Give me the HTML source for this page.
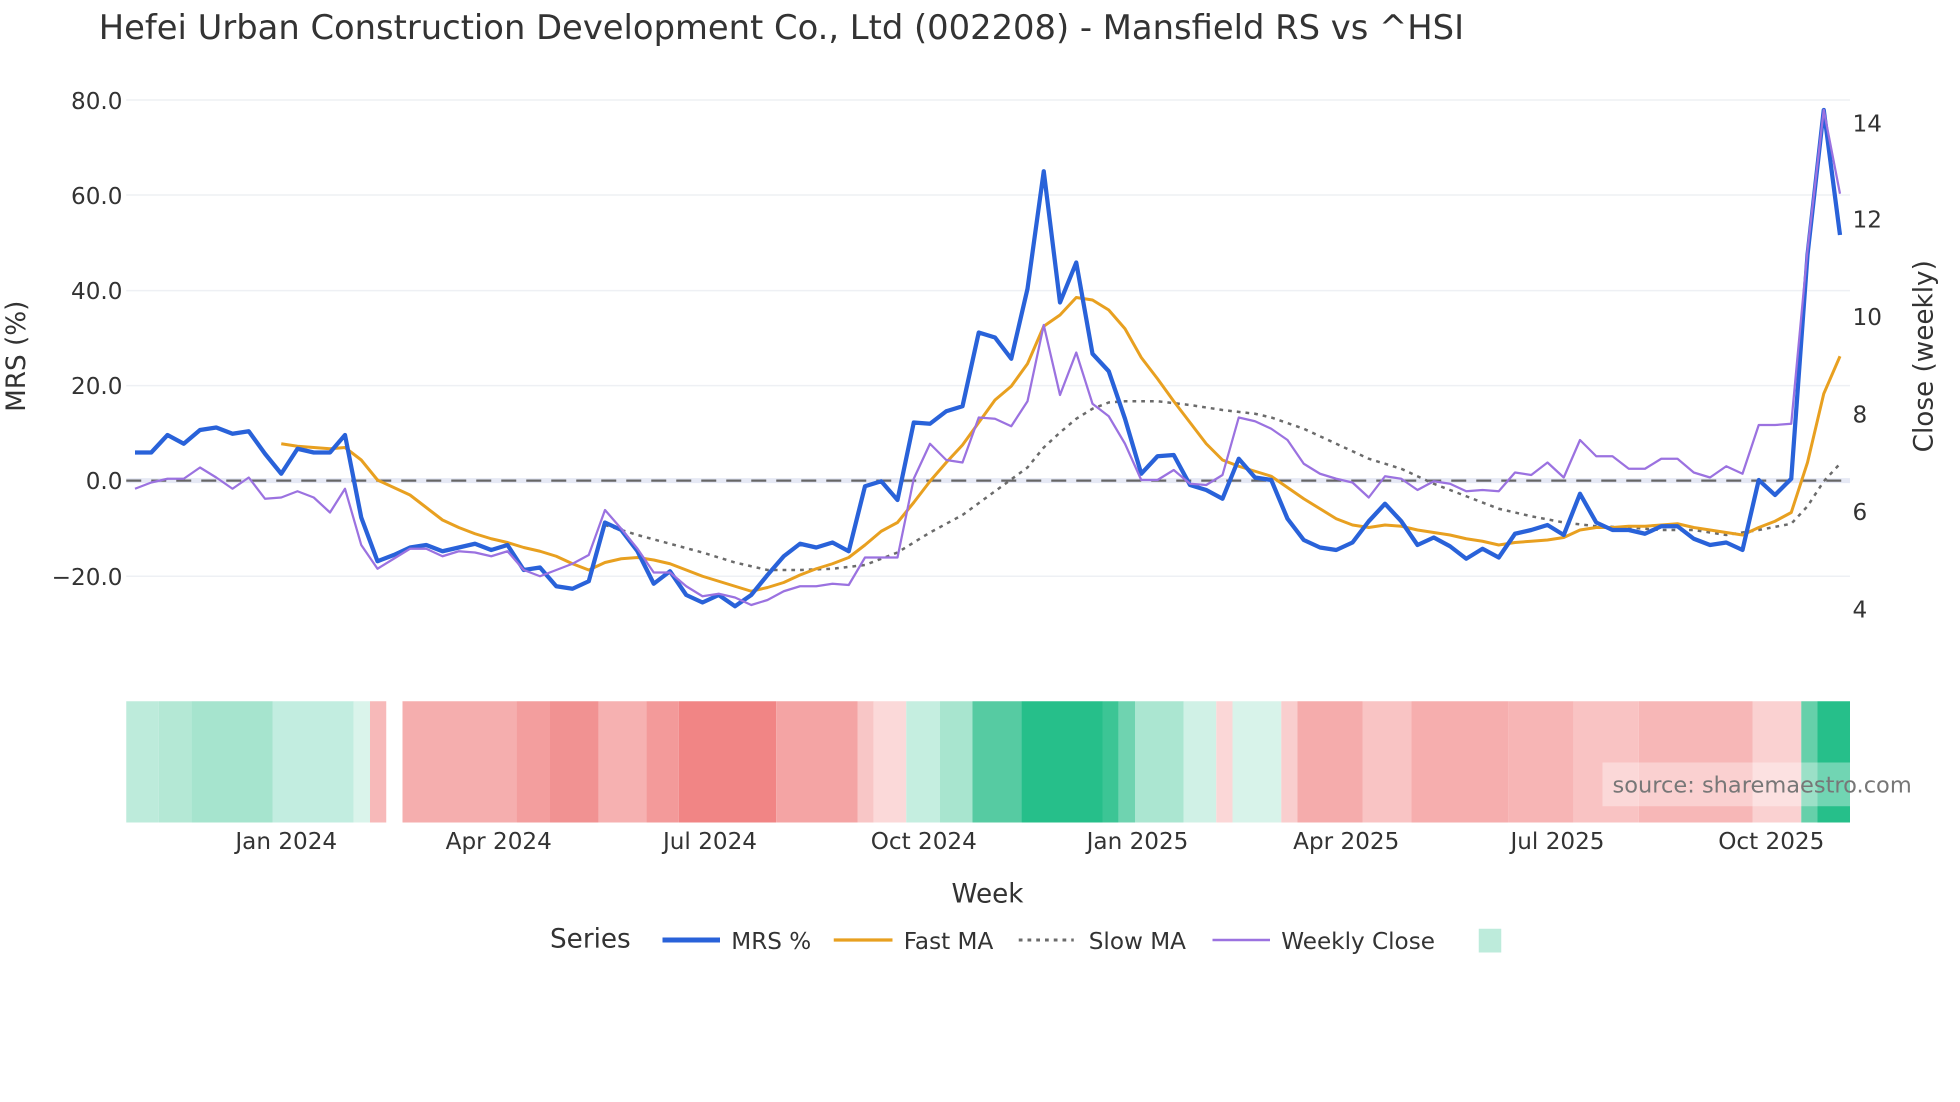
<!DOCTYPE html>
<html><head><meta charset="utf-8"><style>
html,body{margin:0;padding:0;background:#fff;width:1960px;height:1102px;overflow:hidden}
svg{display:block}
text{font-family:"DejaVu Sans","Liberation Sans",sans-serif;fill:#2a3f5f}
</style></head><body>
<svg width="1960" height="1102" viewBox="0 0 1568 881.6" xmlns="http://www.w3.org/2000/svg">
<rect width="1568" height="882" fill="#fff"/>
<text x="79" y="31" font-size="27" fill="#333" style="fill:#333">Hefei Urban Construction Development Co., Ltd (002208) - Mansfield RS vs ^HSI</text>

<g stroke="#eef0f4" stroke-width="1.2">
<line x1="101" y1="80" x2="1480" y2="80"/><line x1="101" y1="156" x2="1480" y2="156"/>
<line x1="101" y1="232.5" x2="1480" y2="232.5"/><line x1="101" y1="308.5" x2="1480" y2="308.5"/>
<line x1="101" y1="461" x2="1480" y2="461"/>
</g>
<line x1="101" y1="384.5" x2="1480" y2="384.5" stroke="#e6e9f5" stroke-width="4"/>
<line x1="101" y1="384.5" x2="1480" y2="384.5" stroke="#666" stroke-width="1.8" stroke-dasharray="12,8"/>

<g font-size="18.5" text-anchor="end" style="fill:#333">
<text x="98" y="87" style="fill:#333">80.0</text><text x="98" y="163" style="fill:#333">60.0</text>
<text x="98" y="239" style="fill:#333">40.0</text><text x="98" y="315" style="fill:#333">20.0</text>
<text x="98" y="391" style="fill:#333">0.0</text><text x="98" y="468" style="fill:#333">−20.0</text>
</g>
<g font-size="18.5" style="fill:#333">
<text x="1482" y="105" style="fill:#333">14</text><text x="1482" y="182" style="fill:#333">12</text>
<text x="1482" y="260" style="fill:#333">10</text><text x="1482" y="338" style="fill:#333">8</text>
<text x="1482" y="416" style="fill:#333">6</text><text x="1482" y="494" style="fill:#333">4</text>
</g>
<text transform="translate(20,285) rotate(-90)" font-size="21" text-anchor="middle" style="fill:#333">MRS (%)</text>
<text transform="translate(1546,285) rotate(-90)" font-size="21" text-anchor="middle" style="fill:#333">Close (weekly)</text>

<polyline fill="none" stroke="#6b6b6b" stroke-width="2" stroke-dasharray="3,4" points="484,420 510,428 536,435 562,442 588,450 614,456 640,456 666,455 692,452 718,442 744,426 770,412 796,393 822,374 835,358 848,346 861,335 874,327 887,322 900,321 926,321 952,324 978,328 1004,331 1017,334 1043,343 1069,355 1095,367 1121,375 1147,387 1173,397 1199,407 1225,413 1251,418 1277,421 1303,422 1329,424 1355,424 1381,428 1407,424 1433,419 1446,405 1459,385 1472,371"/>

<polyline fill="none" stroke="#e8a020" stroke-width="2.4" stroke-linejoin="round" points="225,355 238,357 251,358 264,359 276,358 289,368 302,384 315,390 328,396 341,406 354,416 367,422 380,427 393,431 406,434 419,438 432,441 445,445 458,451 471,456 484,450 497,447 510,446 523,448 536,451 549,456 562,461 575,465 588,469 601,473 614,470 627,466 640,460 653,455 666,451 679,446 692,436 705,425 718,418 731,402 744,385 757,370 770,356 783,338 796,320 809,309 822,291 835,261 848,252 861,238 874,240 887,248 900,263 913,286 926,303 939,321 952,338 965,355 978,368 991,373 1004,377 1017,381 1030,390 1043,399 1056,407 1069,415 1082,420 1095,422 1108,420 1121,421 1134,424 1147,426 1160,428 1173,431 1186,433 1199,436 1212,434 1225,433 1238,432 1251,430 1264,424 1277,422 1290,422 1303,421 1316,421 1329,420 1342,419 1355,422 1368,424 1381,426 1394,428 1407,422 1420,417 1433,410 1446,370 1459,315 1472,285"/>

<polyline fill="none" stroke="#2962d9" stroke-width="3.4" stroke-linejoin="round" points="108,362 121,362 134,348 147,355 160,344 173,342 186,347 199,345 212,363 225,379 238,359 251,362 264,362 276,348 289,414 302,449 315,444 328,438 341,436 354,441 367,438 380,435 393,440 406,436 419,456 432,454 445,469 458,471 471,465 484,418 497,424 510,441 523,467 536,457 549,476 562,482 575,476 588,485 601,476 614,460 627,445 640,435 653,438 666,434 679,441 692,389 705,385 718,400 731,338 744,339 757,329 770,325 783,266 796,270 809,287 822,231 835,137 848,242 861,210 874,283 887,297 900,335 913,379 926,365 939,364 952,388 965,392 978,399 991,367 1004,382 1017,384 1030,415 1043,432 1056,438 1069,440 1082,434 1095,417 1108,403 1121,417 1134,436 1147,430 1160,437 1173,447 1186,439 1199,446 1212,427 1225,424 1238,420 1251,428 1264,395 1277,418 1290,424 1303,424 1316,427 1329,421 1342,421 1355,431 1368,436 1381,434 1394,440 1407,384 1420,396 1433,383 1446,204 1459,88 1472,188"/>

<polyline fill="none" stroke="#9b72e0" stroke-width="1.8" stroke-linejoin="round" points="108,391 121,386 134,383 147,383 160,374 173,382 186,391 199,382 212,399 225,398 238,393 251,398 264,410 276,391 289,436 302,455 315,447 328,439 341,439 354,445 367,441 380,442 393,445 406,441 419,456 432,461 445,456 458,451 471,444 484,408 497,423 510,439 523,458 536,458 549,469 562,477 575,475 588,478 601,484 614,480 627,473 640,469 653,469 666,467 679,468 692,446 705,446 718,446 731,383 744,355 757,368 770,370 783,334 796,335 809,341 822,321 835,260 848,316 861,282 874,323 887,333 900,355 913,384 926,384 939,376 952,387 965,388 978,380 991,334 1004,337 1017,343 1030,352 1043,371 1056,379 1069,383 1082,386 1095,398 1108,381 1121,383 1134,392 1147,385 1160,387 1173,393 1186,392 1199,393 1212,378 1225,380 1238,370 1251,382 1264,352 1277,365 1290,365 1303,375 1316,375 1329,367 1342,367 1355,378 1368,382 1381,373 1394,379 1407,340 1420,340 1433,339 1446,200 1459,88 1472,155"/>

<g>
<rect x="101" y="561" width="26" height="97" fill="#bdebdb"/>
<rect x="127" y="561" width="26" height="97" fill="#b4e8d5"/>
<rect x="153" y="561" width="65" height="97" fill="#a6e4ce"/>
<rect x="218" y="561" width="65" height="97" fill="#c2ede0"/>
<rect x="283" y="561" width="13" height="97" fill="#daf4eb"/>
<rect x="296" y="561" width="13" height="97" fill="#f7b9b9"/>
<rect x="322" y="561" width="91" height="97" fill="#f5aeae"/>
<rect x="413" y="561" width="27" height="97" fill="#f39e9e"/>
<rect x="440" y="561" width="39" height="97" fill="#f19292"/>
<rect x="479" y="561" width="38" height="97" fill="#f6b1b1"/>
<rect x="517" y="561" width="26" height="97" fill="#f39a9a"/>
<rect x="543" y="561" width="78" height="97" fill="#f18585"/>
<rect x="621" y="561" width="65" height="97" fill="#f4a4a4"/>
<rect x="686" y="561" width="13" height="97" fill="#f8c6c6"/>
<rect x="699" y="561" width="26" height="97" fill="#fbd9d9"/>
<rect x="725" y="561" width="27" height="97" fill="#c5eee0"/>
<rect x="752" y="561" width="26" height="97" fill="#a8e5cf"/>
<rect x="778" y="561" width="39" height="97" fill="#56cba2"/>
<rect x="817" y="561" width="65" height="97" fill="#26bf8a"/>
<rect x="882" y="561" width="13" height="97" fill="#3cc595"/>
<rect x="895" y="561" width="13" height="97" fill="#6fd3b0"/>
<rect x="908" y="561" width="39" height="97" fill="#abe6d1"/>
<rect x="947" y="561" width="26" height="97" fill="#d0f1e6"/>
<rect x="973" y="561" width="13" height="97" fill="#fbd7d7"/>
<rect x="986" y="561" width="39" height="97" fill="#d8f3ea"/>
<rect x="1025" y="561" width="13" height="97" fill="#f9cece"/>
<rect x="1038" y="561" width="52" height="97" fill="#f5acac"/>
<rect x="1090" y="561" width="39" height="97" fill="#f9c4c4"/>
<rect x="1129" y="561" width="78" height="97" fill="#f6aeae"/>
<rect x="1207" y="561" width="52" height="97" fill="#f7b5b5"/>
<rect x="1259" y="561" width="52" height="97" fill="#f9c3c3"/>
<rect x="1311" y="561" width="91" height="97" fill="#f7b7b7"/>
<rect x="1402" y="561" width="39" height="97" fill="#fad1d1"/>
<rect x="1441" y="561" width="13" height="97" fill="#66d0aa"/>
<rect x="1454" y="561" width="26" height="97" fill="#26bf8a"/>
</g>
<rect x="1282" y="610" width="263" height="35" fill="#fff" fill-opacity="0.35"/>
<text x="1290" y="634" font-size="18" style="fill:#777">source: sharemaestro.com</text>

<g font-size="18.5" text-anchor="middle" style="fill:#333">
<text x="229" y="679" style="fill:#333">Jan 2024</text><text x="399" y="679" style="fill:#333">Apr 2024</text>
<text x="568" y="679" style="fill:#333">Jul 2024</text><text x="739" y="679" style="fill:#333">Oct 2024</text>
<text x="910" y="679" style="fill:#333">Jan 2025</text><text x="1077" y="679" style="fill:#333">Apr 2025</text>
<text x="1246" y="679" style="fill:#333">Jul 2025</text><text x="1417" y="679" style="fill:#333">Oct 2025</text>
</g>
<text x="790" y="722" font-size="21" text-anchor="middle" style="fill:#333">Week</text>

<text x="440" y="758" font-size="21" style="fill:#333">Series</text>
<line x1="530" y1="752" x2="576" y2="752" stroke="#2962d9" stroke-width="4"/>
<text x="585" y="759" font-size="18.5" style="fill:#333">MRS %</text>
<line x1="667" y1="752" x2="714" y2="752" stroke="#e8a020" stroke-width="2.6"/>
<text x="723" y="759" font-size="18.5" style="fill:#333">Fast MA</text>
<line x1="815" y1="752" x2="859" y2="752" stroke="#6b6b6b" stroke-width="2.4" stroke-dasharray="3,4"/>
<text x="871" y="759" font-size="18.5" style="fill:#333">Slow MA</text>
<line x1="970" y1="752" x2="1016" y2="752" stroke="#9b72e0" stroke-width="2"/>
<text x="1025" y="759" font-size="18.5" style="fill:#333">Weekly Close</text>
<rect x="1183" y="743" width="18" height="19" fill="#bdebdb"/>
</svg>
</body></html>
